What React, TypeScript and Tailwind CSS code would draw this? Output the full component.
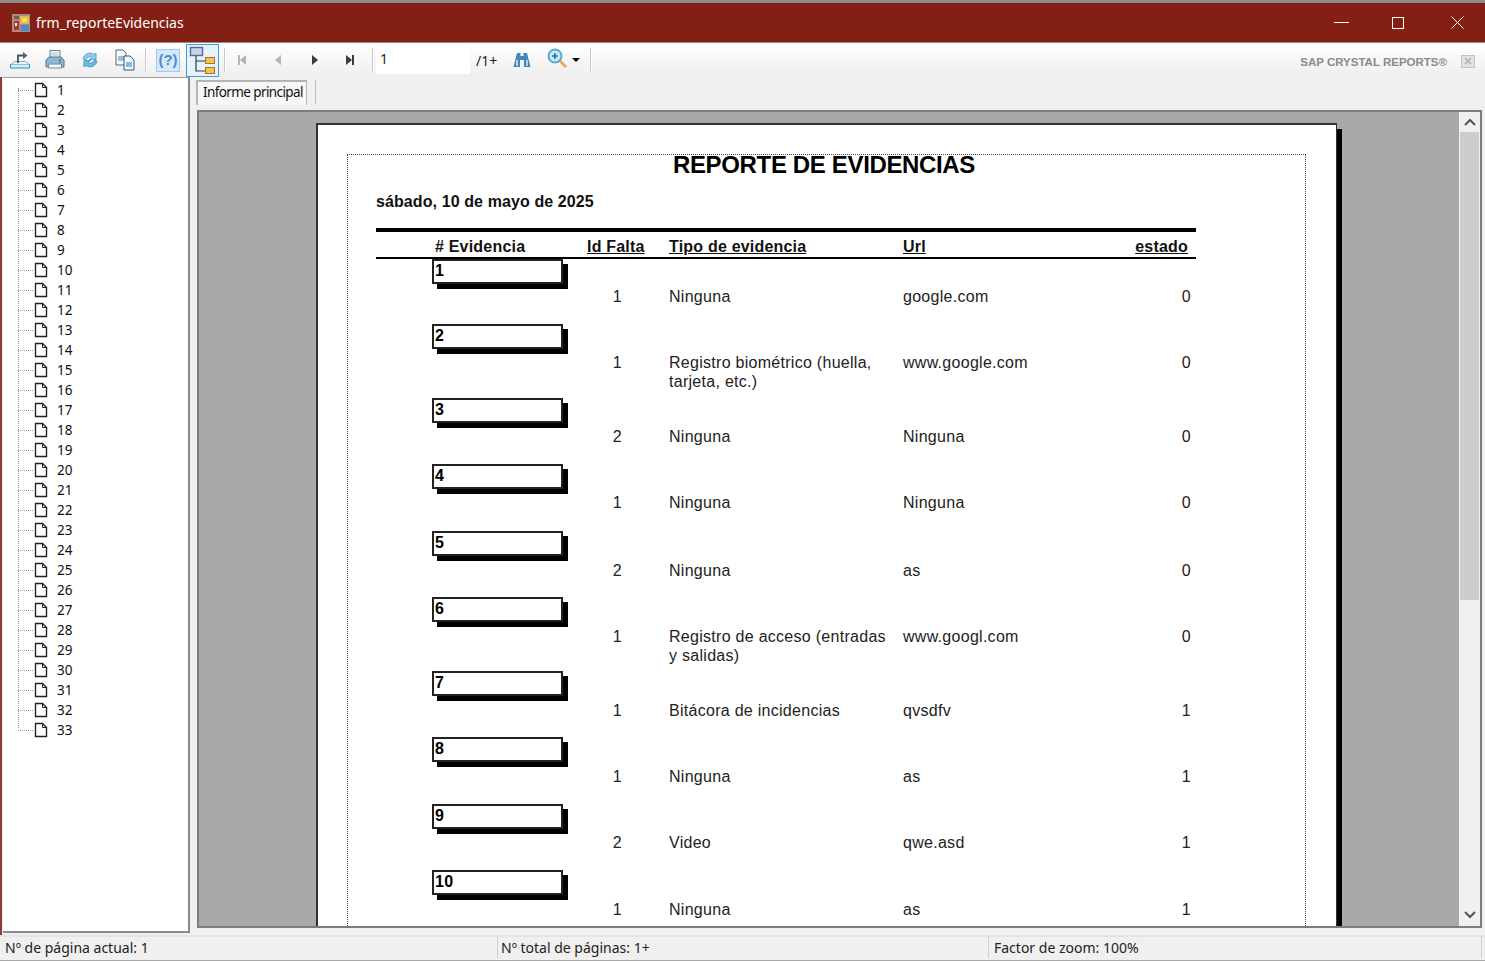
import type { ReactNode } from "react";

interface Evidencia {
  id: number;
  falta: number;
  tipo: ReactNode;
  url: string;
  estado: number;
  height: string;
  textTop: string;
}

const evidencias: Evidencia[] = [
  { id: 1, falta: 1, tipo: "Ninguna", url: "google.com", estado: 0, height: "h-[65px]", textTop: "pt-[28px]" },
  { id: 2, falta: 1, tipo: <>Registro biométrico (huella,<br />tarjeta, etc.)</>, url: "www.google.com", estado: 0, height: "h-[74px]", textTop: "pt-[29px]" },
  { id: 3, falta: 2, tipo: "Ninguna", url: "Ninguna", estado: 0, height: "h-[66px]", textTop: "pt-[29px]" },
  { id: 4, falta: 1, tipo: "Ninguna", url: "Ninguna", estado: 0, height: "h-[67px]", textTop: "pt-[29px]" },
  { id: 5, falta: 2, tipo: "Ninguna", url: "as", estado: 0, height: "h-[66px]", textTop: "pt-[30px]" },
  { id: 6, falta: 1, tipo: <>Registro de acceso (entradas<br />y salidas)</>, url: "www.googl.com", estado: 0, height: "h-[74px]", textTop: "pt-[30px]" },
  { id: 7, falta: 1, tipo: "Bitácora de incidencias", url: "qvsdfv", estado: 1, height: "h-[66px]", textTop: "pt-[30px]" },
  { id: 8, falta: 1, tipo: "Ninguna", url: "as", estado: 1, height: "h-[67px]", textTop: "pt-[30px]" },
  { id: 9, falta: 2, tipo: "Video", url: "qwe.asd", estado: 1, height: "h-[66px]", textTop: "pt-[29px]" },
  { id: 10, falta: 1, tipo: "Ninguna", url: "as", estado: 1, height: "h-[66px]", textTop: "pt-[30px]" },
];

const paginas = Array.from({ length: 33 }, (_, i) => i + 1);

function AppIcon() {
  return (
    <svg width="18" height="18" viewBox="0 0 18 18" className="ml-[12px]">
      <rect x="0" y="0" width="18" height="18" fill="#a58d87" />
      <rect x="8" y="2" width="9" height="8" fill="#e8b93a" />
      <rect x="10" y="4" width="5" height="4" fill="#f6dc6a" />
      <rect x="9" y="11" width="8" height="6" fill="#4f86d8" />
      <rect x="2" y="7" width="5" height="9" fill="#b8342a" />
      <rect x="3" y="9" width="2" height="3" fill="#eee" />
      <rect x="2" y="2" width="5" height="3" fill="#7d5a53" />
    </svg>
  );
}

function ExportIcon() {
  return (
    <svg width="22" height="22" viewBox="0 0 22 22">
      <path d="M1.5 15.5h19v3.5h-19z" fill="#d6ecf9" stroke="#2f88bd" />
      <path d="M2 15.5l3.5-3h11l3.5 3" fill="#eef7fc" stroke="#6fb0d6" />
      <path d="M9 14V6.5h6" fill="none" stroke="#44525c" strokeWidth="1.8" />
      <path d="M14 3l4.5 3.5L14 10z" fill="#6c5a50" />
    </svg>
  );
}

function PrintIcon() {
  return (
    <svg width="22" height="22" viewBox="0 0 22 22">
      <path d="M6 1.5h10v7H6z" fill="#eef2f5" stroke="#6f8494" />
      <path d="M7.5 4h7M7.5 6h7" stroke="#b8c6d0" />
      <path d="M2 11l3-3h12l3 3v7H2z" fill="#8fb8d8" stroke="#4f7896" />
      <path d="M4.5 15h13v4h-13z" fill="#f0f5f8" stroke="#6f8ea6" />
      <rect x="15" y="10" width="2" height="2" fill="#3aa655" />
      <rect x="15" y="12.5" width="2" height="1.5" fill="#c8503a" />
    </svg>
  );
}

function RefreshIcon() {
  return (
    <svg width="20" height="20" viewBox="0 0 20 20">
      <path d="M3 9a7 7 0 0 1 11-4.5L16 3v6.5h-6.5L12 7.5A4 4 0 0 0 6 9.5z" fill="#8fcbea" stroke="#5da5ce" />
      <path d="M17 11a7 7 0 0 1-11 4.5L4 17v-6.5h6.5L8 12.5a4 4 0 0 0 6-2z" fill="#6cb9e4" stroke="#4b97c4" />
    </svg>
  );
}

function CopyIcon() {
  return (
    <svg width="22" height="22" viewBox="0 0 22 22">
      <path d="M2 1h7l3 3v12H2z" fill="#fff" stroke="#55616a" />
      <rect x="4" y="7" width="6" height="5" fill="#8cc4e8" />
      <path d="M10 7h6l4 4v10H10z" fill="#f4f8fb" stroke="#46555f" />
      <rect x="12" y="13" width="6" height="5" fill="#7cbce6" />
    </svg>
  );
}

function TreeToggleIcon() {
  return (
    <svg width="28" height="28" viewBox="0 0 28 28">
      <rect x="1.5" y="1.5" width="12" height="8" fill="#c9d4ee" stroke="#5b6a8c" strokeWidth="1.4" />
      <path d="M7 10v15h9M7 15h9" fill="none" stroke="#2f3f50" strokeWidth="1.2" />
      <rect x="16.5" y="11.5" width="9" height="6" fill="#f6c25a" stroke="#a9761f" />
      <rect x="16.5" y="21.5" width="9" height="6" fill="#f6c25a" stroke="#a9761f" />
    </svg>
  );
}

function BinocularsIcon() {
  return (
    <svg width="18" height="16" viewBox="0 0 18 16">
      <path d="M4 1h3.5v3h3V1H14l3.5 14h-6.5V8H7v7H.5z" fill="#3f87bd" />
      <rect x="3" y="8" width="2" height="6" fill="#a9d3ee" />
      <rect x="13" y="8" width="2" height="6" fill="#a9d3ee" />
    </svg>
  );
}

function ZoomIcon() {
  return (
    <svg width="21" height="21" viewBox="0 0 21 21">
      <path d="M12.5 12.5l6.5 6.5" stroke="#e8a96a" strokeWidth="3" />
      <circle cx="8" cy="8" r="6.5" fill="#cfe8f7" stroke="#5aa6d6" strokeWidth="2" />
      <path d="M8 5v6M5 8h6" stroke="#2b6f9e" strokeWidth="1.6" />
    </svg>
  );
}

function NavIcon({ dir, bar, muted }: { dir: "left" | "right"; bar?: boolean; muted?: boolean }) {
  const fill = muted ? "#b4b4b4" : "#3c3c3c";
  return (
    <svg width="12" height="14" viewBox="0 0 12 14" className="shrink-0">
      {dir === "left" ? <path d="M9 2v10L3 7z" fill={fill} /> : <path d="M3 2v10l6-5z" fill={fill} />}
      {bar && <rect x={dir === "left" ? 1 : 9} y="2" width="2" height="10" fill={fill} />}
    </svg>
  );
}

function Separator({ className }: { className: string }) {
  return <div className={`w-[2px] h-[24px] bg-[#c8c8c8] border-r border-white shrink-0 ${className}`} />;
}

function DocIcon() {
  return (
    <svg width="14" height="16" viewBox="0 0 14 16" className="shrink-0">
      <path d="M1.5 1.5h7l4 4v9h-11z" fill="#fff" stroke="#222" strokeWidth="1.4" />
      <path d="M8.5 1.5v4h4" fill="none" stroke="#222" />
    </svg>
  );
}

function Toolbar() {
  return (
    <div className="h-[34px] flex items-center shrink-0 bg-gradient-to-b from-white to-[#eeeeee] text-[#222]">
      <div className="ml-[9px] w-[22px]"><ExportIcon /></div>
      <div className="ml-[13px] w-[22px]"><PrintIcon /></div>
      <div className="ml-[14px] w-[20px]"><RefreshIcon /></div>
      <div className="ml-[14px] w-[22px]"><CopyIcon /></div>
      <Separator className="ml-[9px]" />
      <div className="ml-[9px] w-[24px] h-[23px] flex items-center justify-center bg-[#d5e9fb] border border-[#9bcbf2] text-[#4a8ccc] text-[15px] font-bold font-['Liberation_Sans',sans-serif] shrink-0">(?)</div>
      <div className="ml-[6px] w-[33px] h-[33px] flex items-center justify-center bg-[#e6f2fc] border border-[#3f9ae0] shrink-0"><TreeToggleIcon /></div>
      <Separator className="ml-[5px]" />
      <div className="ml-[11px]"><NavIcon dir="left" bar muted /></div>
      <div className="ml-[23px]"><NavIcon dir="left" muted /></div>
      <div className="ml-[25px]"><NavIcon dir="right" /></div>
      <div className="ml-[22px]"><NavIcon dir="right" bar /></div>
      <Separator className="ml-[17px]" />
      <div className="ml-[2px] w-[94px] h-[28px] bg-white text-[14px] pl-[4px] leading-[26px] shrink-0">1</div>
      <div className="ml-[6px] w-[22px] text-[14px] shrink-0">/1+</div>
      <div className="ml-[15px]"><BinocularsIcon /></div>
      <div className="ml-[16px] -mt-[3px]"><ZoomIcon /></div>
      <div className="ml-[4px] w-0 h-0 border-x-[4px] border-x-transparent border-t-[4px] border-t-black" />
      <Separator className="ml-[10px]" />
      <div className="ml-auto mr-[14px] text-[11.5px] font-bold text-[#8a8a8a] font-['Liberation_Sans',sans-serif] relative top-[3px]">SAP CRYSTAL REPORTS®</div>
      <div className="mr-[10px] w-[14px] h-[13px] bg-[#e2e2e2] border border-[#c4c4c4] flex items-center justify-center relative top-[1px]">
        <svg width="8" height="8" viewBox="0 0 8 8"><path d="M1 1l6 6M7 1L1 7" stroke="#a8a8a8" strokeWidth="1.2" /></svg>
      </div>
    </div>
  );
}

function TreePanel() {
  return (
    <div className="w-[187px] ml-[1px] mb-[2px] bg-white border-t border-[#a0a0a0] border-r-2 border-b-2 border-r-[#8a8a8a] border-b-[#8a8a8a] shrink-0 pt-[2px] relative">
      {/* trunk of the tree, dotted */}
      <div className="absolute left-[15px] top-[10px] h-[640px] border-l border-dotted border-[#9a9a9a]" />
      {paginas.map((p) => (
        <div key={p} className="h-[20px] flex items-center text-[13.5px] text-[#111]">
          <div className="ml-[15px] w-[15px] border-t border-dotted border-[#9a9a9a]" />
          <div className="ml-[1px]"><DocIcon /></div>
          <span className="ml-[9px]">{p}</span>
        </div>
      ))}
    </div>
  );
}

function ReportRow({ row }: { row: Evidencia }) {
  return (
    <div className={`flex ${row.height} text-[16px] leading-[19px] text-[#222] tracking-[0.28px]`}>
      <div className="ml-[56px] w-[131px] h-[25px] bg-white border-2 border-[#222] shadow-[5px_5px_0_#000] font-bold text-black pl-[1px] leading-[19px] shrink-0">
        {row.id}
      </div>
      <div className={`w-[59px] text-right ${row.textTop}`}>{row.falta}</div>
      <div className={`ml-[47px] w-[234px] shrink-0 ${row.textTop}`}>{row.tipo}</div>
      <div className={`w-[200px] ${row.textTop}`}>{row.url}</div>
      <div className={`w-[88px] text-right ${row.textTop}`}>{row.estado}</div>
    </div>
  );
}

function ReportPage() {
  return (
    <div className="ml-[117px] mt-[11px] w-[1021px] h-[1100px] bg-white border-t-2 border-l-2 border-r border-[#333] shadow-[5px_6px_0_#000] shrink-0 pt-[29px] pl-[29px]">
      <div className="w-[959px] h-[1000px] border-t border-l border-r border-dotted border-[#444] font-['Liberation_Sans',sans-serif]">
        <div className="-mt-[2px] text-center text-[24px] font-bold text-black tracking-[-0.35px] leading-[24px] pr-[5px]">REPORTE DE EVIDENCIAS</div>
        <div className="ml-[28px] mt-[13px] text-[16px] font-bold text-[#111] leading-[24px] tracking-[0.1px]">sábado, 10 de mayo de 2025</div>
        <div className="ml-[28px] w-[820px] mt-[14px]">
          <div className="h-[4px] bg-black" />
          <div className="h-[27px] flex items-end pb-[1px] text-[16px] font-bold text-[#111] leading-[18px] border-b-2 border-black tracking-[0.2px]">
            <div className="ml-[59px] w-[152px]"># Evidencia</div>
            <div className="w-[82px] underline">Id Falta</div>
            <div className="w-[234px] underline">Tipo de evidencia</div>
            <div className="w-[200px] underline">Url</div>
            <div className="w-[85px] text-right underline">estado</div>
          </div>
          {evidencias.map((row) => <ReportRow key={row.id} row={row} />)}
        </div>
      </div>
    </div>
  );
}

function Scrollbar() {
  return (
    <div className="w-[21px] h-full bg-[#f0f0f0] flex flex-col items-center shrink-0">
      <div className="h-[20px] flex items-center justify-center">
        <svg width="12" height="8" viewBox="0 0 12 8"><path d="M1 7l5-5 5 5" fill="none" stroke="#555" strokeWidth="2" /></svg>
      </div>
      <div className="w-[19px] h-[468px] bg-[#cdcdcd]" />
      <div className="mt-auto h-[22px] flex items-center justify-center">
        <svg width="12" height="8" viewBox="0 0 12 8"><path d="M1 1l5 5 5-5" fill="none" stroke="#555" strokeWidth="2" /></svg>
      </div>
    </div>
  );
}

export default function App() {
  return (
    <div className="w-[1485px] h-[961px] flex flex-col bg-[#f0f0f0] overflow-hidden font-['Noto_Sans',sans-serif]">
      <div className="h-[3px] bg-[#8c8c8c] shrink-0" />
      <div className="h-[39px] bg-[#841f14] flex items-center text-white shrink-0">
        <AppIcon />
        <span className="ml-[6px] text-[14px]">frm_reporteEvidencias</span>
        <div className="ml-auto mr-[43px] w-[15px] h-px bg-white" />
        <div className="mr-[47px] w-[12px] h-[12px] border border-white" />
        <svg width="13" height="13" viewBox="0 0 13 13" className="mr-[21px]"><path d="M.5.5l12 12M12.5.5l-12 12" stroke="#fff" /></svg>
      </div>
      <div className="h-px bg-[#8c8c8c] shrink-0" />
      <Toolbar />
      <div className="flex-1 flex min-h-0 border-l-2 border-[#8f3a32]">
        <TreePanel />
        <div className="ml-[7px] flex-1 flex flex-col min-w-0 mr-[3px]">
          <div className="h-[33px] flex items-start shrink-0 pt-[3px]">
            <div className="-ml-[1px] h-[25px] w-[111px] pl-[5px] bg-[#f7f7f7] border-t-2 border-l-2 border-r border-[#b4b4b4] text-[13.5px] text-[#111] leading-[20px] tracking-[-0.6px] whitespace-nowrap">Informe principal</div>
            <div className="ml-[8px] w-px h-[24px] bg-[#bdbdbd]" />
          </div>
          <div className="h-[818px] flex border-2 border-[#7d7d7d] bg-[#a9a9a9] overflow-hidden">
            <div className="flex-1 min-w-0 overflow-hidden">
              <ReportPage />
            </div>
            <Scrollbar />
          </div>
        </div>
      </div>
      <div className="h-[26px] flex items-center text-[14px] text-[#222] border-t-2 border-[#e4e4e4] border-b border-b-[#a8a8a8] shrink-0 pb-[2px]">
        <div className="w-[497px] pl-[5px]">Nº de página actual: 1</div>
        <div className="w-[491px] pl-[3px] border-l border-[#d0d0d0]">Nº total de páginas: 1+</div>
        <div className="w-[494px] pl-[5px] border-x border-[#d0d0d0]">Factor de zoom: 100%</div>
      </div>
    </div>
  );
}
